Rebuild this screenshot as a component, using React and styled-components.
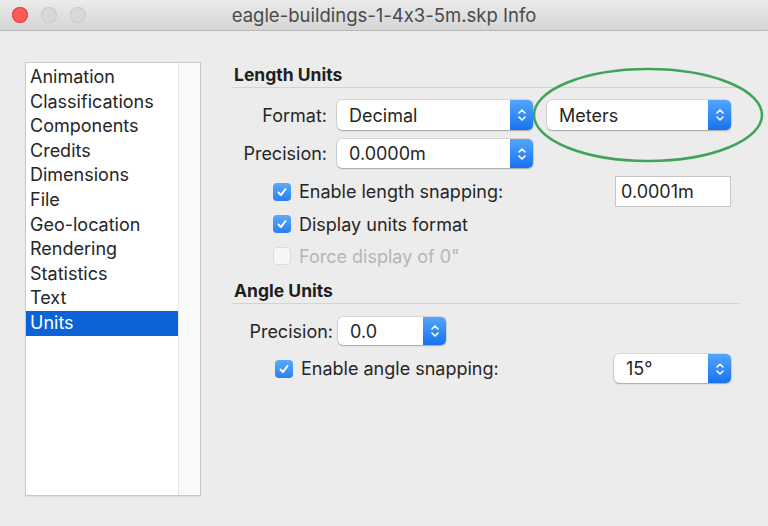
import React from "react"
import styled, { createGlobalStyle } from "styled-components"

const GlobalStyle = createGlobalStyle`
  html, body {
    margin: 0;
    padding: 0;
    background: #ececec;
  }
  body {
    font-family: Inter, "Liberation Sans", sans-serif;
    font-feature-settings: "calt" 0;
    color: #222;
    -webkit-font-smoothing: antialiased;
  }
`

const categories = [
  "Animation",
  "Classifications",
  "Components",
  "Credits",
  "Dimensions",
  "File",
  "Geo-location",
  "Rendering",
  "Statistics",
  "Text",
  "Units",
]

function Stepper() {
  return (
    <svg width="10" height="16" viewBox="0 0 10 16" fill="none">
      <path d="M2 6 L5 3 L8 6" stroke="#fff" strokeWidth="1.6" strokeLinecap="round" strokeLinejoin="round" />
      <path d="M2 10 L5 13 L8 10" stroke="#fff" strokeWidth="1.6" strokeLinecap="round" strokeLinejoin="round" />
    </svg>
  )
}

function Popup({ value, width, height = 30 }) {
  return (
    <PopupBox $width={width} $height={height}>
      <PopupValue>{value}</PopupValue>
      <PopupArrows>
        <Stepper />
      </PopupArrows>
    </PopupBox>
  )
}

function Check({ checked, disabled, children }) {
  return (
    <CheckLabel $disabled={disabled}>
      <CheckBox $checked={checked}>
        {checked && (
          <svg width="12" height="12" viewBox="0 0 12 12" fill="none">
            <path d="M2.5 6.5 L5 9 L9.5 3" stroke="#fff" strokeWidth="2" strokeLinecap="round" strokeLinejoin="round" />
          </svg>
        )}
      </CheckBox>
      {children}
    </CheckLabel>
  )
}

export default function App() {
  return (
    <Window>
      <GlobalStyle />
      <TitleBar>
        <Lights>
          <Light $color="#fc5b57" $border="#e2463f" />
          <Light $color="#d8d8d8" $border="#cacaca" />
          <Light $color="#d8d8d8" $border="#cacaca" />
        </Lights>
        <Title>eagle-buildings-1-4x3-5m.skp Info</Title>
      </TitleBar>
      <Body>
        <Sidebar>
          <List>
            {categories.map((c) => (
              <ListItem key={c} $selected={c === "Units"}>
                {c}
              </ListItem>
            ))}
          </List>
          <ScrollTrack />
        </Sidebar>
        <Panel>
          <SectionHeader>Length Units</SectionHeader>
          <FieldRow $top={12} $labelWidth={95} $gap={10}>
            <FieldLabel>Format:</FieldLabel>
            <Popup value="Decimal" width={196} />
            <Spacer $w={14} />
            <Popup value="Meters" width={184} />
            <Annotation viewBox="0 0 234 98" width="234" height="98">
              <ellipse cx="117" cy="49" rx="114" ry="46" stroke="#3fa35a" strokeWidth="2.5" fill="none" />
            </Annotation>
          </FieldRow>
          <FieldRow $top={9} $labelWidth={95} $gap={10}>
            <FieldLabel>Precision:</FieldLabel>
            <Popup value="0.0000m" width={196} height={29} />
          </FieldRow>
          <CheckRow $top={8} $indent={41}>
            <Check checked>Enable length snapping:</Check>
            <TextField>0.0001m</TextField>
          </CheckRow>
          <CheckRow $top={5} $indent={41} $height={24}>
            <Check checked>Display units format</Check>
          </CheckRow>
          <CheckRow $top={8} $indent={41} $height={24}>
            <Check disabled>Force display of 0"</Check>
          </CheckRow>
          <SectionHeader $top={10}>Angle Units</SectionHeader>
          <FieldRow $top={13} $labelWidth={101} $gap={5}>
            <FieldLabel>Precision:</FieldLabel>
            <Popup value="0.0" width={108} height={28} />
          </FieldRow>
          <CheckRow $top={8} $indent={43}>
            <Check checked>Enable angle snapping:</Check>
            <Popup value="15°" width={117} height={29} />
          </CheckRow>
        </Panel>
      </Body>
    </Window>
  )
}

const Window = styled.div`
  width: 768px;
  height: 526px;
  background: #ececec;
  overflow: hidden;
`

const TitleBar = styled.div`
  height: 31px;
  position: relative;
  display: flex;
  align-items: center;
  justify-content: center;
  background: linear-gradient(#ebebeb, #d5d5d5);
  border-bottom: 1px solid #b8b8b8;
  box-sizing: border-box;
`

const Lights = styled.div`
  position: absolute;
  left: 12px;
  top: 7px;
  display: flex;
  gap: 13px;
`

const Light = styled.div`
  width: 16px;
  height: 16px;
  border-radius: 50%;
  background: ${(p) => p.$color};
  box-shadow: inset 0 0 0 1px ${(p) => p.$border};
`

const Title = styled.div`
  font-size: 18.5px;
  color: #4a4a4a;
`

const Body = styled.div`
  display: flex;
  padding: 31px 29px 0 25px;
`

const Sidebar = styled.div`
  width: 176px;
  height: 434px;
  box-sizing: border-box;
  display: flex;
  background: #fff;
  border: 1px solid #c9c9c9;
  box-shadow: 0 1px 1px rgba(0, 0, 0, 0.05);
`

const List = styled.div`
  flex: 1;
  padding-top: 2px;
`

const ScrollTrack = styled.div`
  width: 21px;
  background: #fafafa;
  border-left: 1px solid #e6e6e6;
`

const ListItem = styled.div`
  height: 24.6px;
  line-height: 24.6px;
  padding-left: 4px;
  font-size: 18px;
  color: ${(p) => (p.$selected ? "#fff" : "#262626")};
  background: ${(p) => (p.$selected ? "#0b63d7" : "transparent")};
`

const Panel = styled.div`
  margin-left: 31px;
  width: 507px;
  display: flex;
  flex-direction: column;
`

const SectionHeader = styled.div`
  margin-top: ${(p) => p.$top || 0}px;
  height: 26px;
  line-height: 26px;
  padding-left: 2px;
  box-sizing: border-box;
  font-size: 17.5px;
  font-weight: 700;
  color: #1e1e1e;
  border-bottom: 1px solid #d3d3d3;
`

const FieldRow = styled.div`
  margin-top: ${(p) => p.$top}px;
  display: flex;
  align-items: center;
  position: relative;

  & > :first-child {
    width: ${(p) => p.$labelWidth}px;
    margin-right: ${(p) => p.$gap}px;
  }
`

const FieldLabel = styled.div`
  text-align: right;
  font-size: 18px;
  color: #262626;
  white-space: nowrap;
`

const Spacer = styled.div`
  width: ${(p) => p.$w}px;
`

const PopupBox = styled.div`
  width: ${(p) => p.$width}px;
  height: ${(p) => p.$height}px;
  box-sizing: border-box;
  display: flex;
  background: #fff;
  border-radius: 5px;
  box-shadow: 0 0 0 0.5px rgba(0, 0, 0, 0.18), 0 1px 1.5px rgba(0, 0, 0, 0.22);
  overflow: hidden;
`

const PopupValue = styled.div`
  flex: 1;
  display: flex;
  align-items: center;
  padding-left: 12px;
  font-size: 18px;
  color: #262626;
`

const PopupArrows = styled.div`
  width: 23px;
  display: flex;
  align-items: center;
  justify-content: center;
  background: linear-gradient(#52a6fb, #1872f0);
`

const Annotation = styled.svg`
  position: absolute;
  left: 299px;
  top: -34px;
  pointer-events: none;
`

const CheckRow = styled.div`
  margin-top: ${(p) => p.$top}px;
  height: ${(p) => p.$height || 31}px;
  padding-left: ${(p) => p.$indent}px;
  padding-right: 8px;
  display: flex;
  align-items: center;
  justify-content: space-between;
`

const CheckLabel = styled.div`
  display: flex;
  align-items: center;
  gap: 8px;
  font-size: 18px;
  color: ${(p) => (p.$disabled ? "#b5b5b5" : "#262626")};
`

const CheckBox = styled.div`
  width: 18px;
  height: 18px;
  box-sizing: border-box;
  border-radius: 4px;
  display: flex;
  align-items: center;
  justify-content: center;
  background: ${(p) => (p.$checked ? "linear-gradient(#5aaafb, #2a7ff2)" : "#f7f7f7")};
  border: ${(p) => (p.$checked ? "none" : "1px solid #dcdcdc")};
`

const TextField = styled.div`
  width: 116px;
  height: 31px;
  box-sizing: border-box;
  display: flex;
  align-items: center;
  padding-left: 5px;
  background: #fff;
  border: 1px solid #c6c6c6;
  font-size: 18px;
  color: #262626;
`
